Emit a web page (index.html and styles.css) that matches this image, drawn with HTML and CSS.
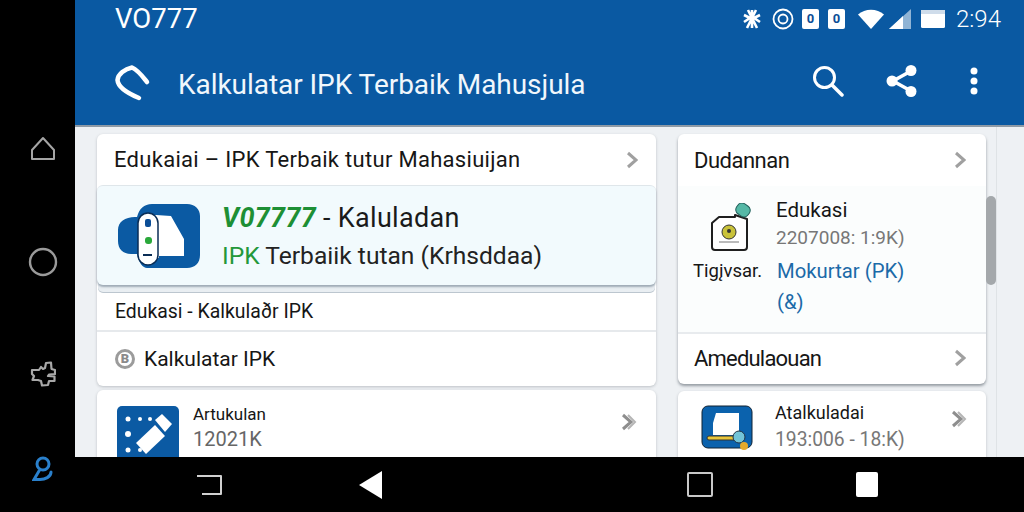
FILE: index.html
```html
<!DOCTYPE html>
<html lang="id">
<head>
<meta charset="utf-8">
<title>Kalkulator IPK</title>
<link rel="stylesheet" href="styles.css">
</head>
<body>
<div class="screen">
  <aside class="rail">
    <svg class="rail-ico home" viewBox="0 0 26 26"><path d="M2 23V14L13 2L24 14V23Z" fill="none" stroke="#a5a5a5" stroke-width="2" stroke-linejoin="round"/></svg>
    <svg class="rail-ico circle" viewBox="0 0 30 30"><circle cx="15" cy="15" r="13" fill="none" stroke="#9a9a9a" stroke-width="2.4"/></svg>
    <svg class="rail-ico puzzle" viewBox="0 0 26 26"><path d="M2 9H9L11 6L13 8L15 7L16 2L21 1.500L21.500 8L25 9V13L19 13.500L18 15L24.500 15.500V20H19L18 24L12 24.500L11 20L8 19H2.500L4 15L2 13Z" fill="none" stroke="#a8a8a8" stroke-width="2.200" stroke-linejoin="round"/></svg>
    <svg class="rail-ico person" viewBox="0 0 22 26"><circle cx="11" cy="8" r="6" fill="none" stroke="#2a80cc" stroke-width="3"/><path d="M7 15L2 23.500L8 23.500C13 23.500 19 21 19 16" fill="none" stroke="#2a80cc" stroke-width="3" stroke-linecap="round"/></svg>
  </aside>
  <div class="main">
    <header class="appbar">
      <div class="status">
        <span class="carrier">VO777</span>
        <div class="status-icons">
          <svg class="st st-a" viewBox="0 0 18 20"><path d="M5 1L14 19M13 1L4 19M1 6L7 9L1 13M17 6L11 9L17 13M9 1V8M9 12V19" fill="none" stroke="#fff" stroke-width="2.600"/></svg>
          <svg class="st st-b" viewBox="0 0 22 22"><circle cx="11" cy="11" r="9.500" fill="none" stroke="#fff" stroke-width="1.800"/><circle cx="11" cy="11" r="4.500" fill="none" stroke="#fff" stroke-width="1.800"/></svg>
          <span class="tile">0</span>
          <span class="tile">0</span>
          <svg class="st st-wifi" viewBox="0 0 26 20"><path d="M0 5.500C7 -1 19 -1 26 5.500L13 20Z" fill="#fff"/></svg>
          <svg class="st st-sig" viewBox="0 0 22 20"><path d="M0 20L22 0V20Z" fill="#fff" opacity=".55"/><path d="M0 20L14 7V20Z" fill="#fff"/></svg>
          <svg class="st st-bat" viewBox="0 0 24 18"><rect width="24" height="18" rx="1.500" fill="#fff"/><rect width="24" height="4" fill="#cfdcea"/></svg>
          <span class="time">2:94</span>
        </div>
      </div>
      <div class="toolbar">
        <svg class="logo" viewBox="0 0 36 36"><path d="M32 17C28 12 23 5 17 2.500C10 4 3 9 2.500 15C3 22 12 28 24 33" fill="none" stroke="#fff" stroke-width="4.500" stroke-linecap="round" stroke-linejoin="round"/></svg>
        <h1 class="app-title">Kalkulatar IPK Terbaik Mahusjula</h1>
        <div class="actions">
          <svg class="act search" viewBox="0 0 32 32"><circle cx="12.500" cy="12.500" r="10" fill="none" stroke="#fff" stroke-width="3"/><path d="M20 20L30 30" stroke="#fff" stroke-width="3.500" stroke-linecap="round"/></svg>
          <svg class="act share" viewBox="0 0 32 34"><path d="M25 7L7 17L25 27" fill="none" stroke="#fff" stroke-width="3.500"/><circle cx="25" cy="6.500" r="5.500" fill="#fff"/><circle cx="6" cy="17" r="5.500" fill="#fff"/><circle cx="25" cy="27.500" r="5.500" fill="#fff"/></svg>
          <svg class="act more" viewBox="0 0 8 28"><circle cx="4" cy="4" r="3.500" fill="#fff"/><circle cx="4" cy="14" r="3.500" fill="#fff"/><circle cx="4" cy="24" r="3.500" fill="#fff"/></svg>
        </div>
      </div>
    </header>
    <div class="content">
      <section class="col col-left">
        <div class="card card-main">
          <div class="row row-head">
            <span class="t-head t-head-wide">Edukaiai – IPK Terbaik tutur Mahasiuijan</span>
            <svg class="chev" viewBox="0 0 12 18"><path d="M2 2L10 9L2 16" fill="none" stroke="#a0a0a0" stroke-width="3"/></svg>
          </div>
          <div class="hero">
            <svg class="hero-ico" viewBox="0 0 84 66"><path d="M18 14H20C22 6 27 1 35 1H70C78 1 83 6 83 13V52C83 60 78 65 70 65H30C26 65 22 60 20 51H14C6 51 1 46 1 38V27C1 19 8 14 18 14Z" fill="#0b5aa3"/><path d="M30 12H39L54 13L67 36V53H42V55H30Z" fill="#fff"/><rect x="21" y="10" width="20" height="52" rx="10" fill="#fff" stroke="#0a2d55" stroke-width="1.500"/><rect x="28" y="16" width="6" height="8" rx="2" fill="#0b4d96"/><rect x="28" y="34" width="7" height="7" rx="3" fill="#2aa83a"/><rect x="26" y="51" width="9" height="2" fill="#0a2d55"/></svg>
            <div class="hero-text">
              <div class="hero-l1"><em class="brand">V07777</em> - Kaluladan</div>
              <div class="hero-l2"><span class="green">IPK</span> Terbaiik tutan (Krhsddaa)</div>
            </div>
          </div>
          <div class="row row-sub"><span class="t-sub">Edukasi - Kalkulaðr IPK</span></div>
          <div class="row row-kalk">
            <span class="badge">B</span>
            <span class="t-kalk">Kalkulatar IPK</span>
          </div>
        </div>
        <div class="card card-low">
          <svg class="low-ico" viewBox="0 0 62 62"><rect width="62" height="62" rx="5" fill="#0b5aa3"/><path d="M19 37L38 19L48 30L29 48Z" fill="#fff"/><path d="M38 14L45 8L55 18L48 26Z" fill="#fff"/><g fill="#fff"><circle cx="11" cy="13" r="2.500"/><circle cx="23" cy="13" r="2"/><circle cx="33" cy="13" r="2"/><circle cx="11" cy="28" r="3"/><circle cx="11" cy="44" r="2.500"/><circle cx="23" cy="44" r="2"/></g></svg>
          <div class="low-text">
            <div class="low-name low-name-small">Artukulan</div>
            <div class="low-meta">12021K</div>
          </div>
          <svg class="chev chev-double" viewBox="0 0 16 18"><path d="M2 2L10 9L2 16" fill="none" stroke="#8e8e8e" stroke-width="3"/><path d="M7 2L14 9L7 16" fill="none" stroke="#b5b5b5" stroke-width="2"/></svg>
        </div>
      </section>
      <section class="col col-right">
        <div class="card card-side">
          <div class="row row-head-side">
            <span class="t-head t-head-tight">Dudannan</span>
            <svg class="chev" viewBox="0 0 12 18"><path d="M2 2L10 9L2 16" fill="none" stroke="#a0a0a0" stroke-width="3"/></svg>
          </div>
          <div class="detail">
            <div class="detail-top">
              <svg class="doc-ico" viewBox="0 0 42 48"><path d="M8 14H24V12L36 16V44C36 46 35 47 33 47H4C2 47 1 46 1 44V20Z" fill="#fff" stroke="#1f1f1f" stroke-width="2" stroke-linejoin="round"/><circle cx="18" cy="29" r="7" fill="#c9c23a" stroke="#333" stroke-width="1"/><circle cx="18" cy="28" r="2" fill="#333"/><path d="M8 39H28" stroke="#777" stroke-width="1"/><rect x="25" y="1" width="14" height="12" rx="5" transform="rotate(35 32 7)" fill="#55b8a6" stroke="#1f5f5a" stroke-width="1"/></svg>
              <div class="detail-text">
                <div class="low-name low-name-edu">Edukasi</div>
                <div class="detail-meta">2207008: 1:9K)</div>
              </div>
            </div>
            <div class="detail-bottom">
              <span class="tig">Tigįvsar.</span>
              <span class="link">Mokurtar (PK)<br>(&amp;)</span>
            </div>
          </div>
          <div class="row row-foot">
            <span class="t-head t-head-foot">Amedulaouan</span>
            <svg class="chev" viewBox="0 0 12 18"><path d="M2 2L10 9L2 16" fill="none" stroke="#a0a0a0" stroke-width="3"/></svg>
          </div>
        </div>
        <div class="card card-low card-low-side">
          <svg class="low-ico2" viewBox="0 0 54 46"><rect x="1" y="1" width="50" height="42" rx="6" fill="#0b62ad" stroke="#123" stroke-width="1"/><path d="M15 8H38V30H12V18Z" fill="#fff"/><rect x="6" y="31" width="30" height="4" rx="2" fill="#e7c53a" stroke="#333" stroke-width="1"/><circle cx="38" cy="32" r="6" fill="#72c4d8" stroke="#234" stroke-width="1"/><circle cx="43" cy="41" r="4" fill="#e4a92b"/></svg>
          <div class="low-text2">
            <div class="low-name">Atalkuladai</div>
            <div class="low-meta2">193:006 - 18:K)</div>
          </div>
          <svg class="chev chev-double" viewBox="0 0 16 18"><path d="M2 2L10 9L2 16" fill="none" stroke="#8e8e8e" stroke-width="3"/><path d="M7 2L14 9L7 16" fill="none" stroke="#b5b5b5" stroke-width="2"/></svg>
        </div>
      </section>
      <div class="track"><div class="thumb"></div></div>
    </div>
    <nav class="navbar">
      <svg class="nav-recent" viewBox="0 0 28 22"><path d="M1 2H25V20H6" fill="none" stroke="#d0d0d0" stroke-width="2" stroke-linejoin="round"/></svg>
      <svg class="nav-back" viewBox="0 0 24 28"><path d="M0 14L23 0V28Z" fill="#fff"/></svg>
      <span class="nav-square"></span>
      <span class="nav-solid"></span>
    </nav>
  </div>
</div>
</body>
</html>
```
FILE: styles.css
```css
* { box-sizing: border-box; margin: 0; padding: 0; }
html, body { width: 1024px; height: 512px; overflow: hidden; background: #000; }
body { font-family: Roboto, "Liberation Sans", sans-serif; color: #161616; }
svg { display: block; flex: none; }

.screen { display: flex; width: 1024px; height: 512px; }

.rail { width: 75px; flex: none; background: #000; display: flex; flex-direction: column; align-items: center; padding-top: 136px; padding-left: 10px; }
.rail-ico.home { width: 26px; height: 26px; }
.rail-ico.circle { width: 30px; height: 30px; margin-top: 85px; }
.rail-ico.puzzle { width: 26px; height: 26px; margin-top: 84px; }
.rail-ico.person { width: 22px; height: 26px; margin-top: 69px; }

.main { flex: 1; display: flex; flex-direction: column; min-width: 0; }

.appbar { height: 127px; flex: none; background: #0a59a2; border-bottom: 2px solid #8e9aa6; color: #fff; padding: 0 22px 0 40px; }
.status { height: 37px; display: flex; align-items: center; justify-content: space-between; }
.carrier { font-size: 27.500px; line-height: 37px; }
.status-icons { display: flex; align-items: center; }
.st-a { width: 18px; height: 20px; }
.st-b { width: 22px; height: 22px; margin-left: 11px; }
.tile { width: 17px; height: 20px; margin-left: 8px; background: #fff; color: #0b4d96; border-radius: 2px; font-size: 13px; font-weight: 700; line-height: 20px; text-align: center; }
.tile + .tile { margin-left: 9px; }
.st-wifi { width: 26px; height: 20px; margin-left: 13px; }
.st-sig { width: 22px; height: 20px; margin-left: 5px; }
.st-bat { width: 24px; height: 18px; margin-left: 10px; }
.time { font-size: 24px; line-height: 24px; margin-left: 11px; width: 46px; font-weight: 300; white-space: nowrap; }

.toolbar { display: flex; align-items: center; height: 88px; }
.logo { width: 36px; height: 36px; margin-top: 4px; }
.app-title { font-size: 28px; font-weight: 400; margin: 6px 0 0 27px; white-space: nowrap; color: #f1f7fc; letter-spacing: -0.05px; }
.actions { margin-left: auto; display: flex; align-items: center; padding-right: 24px; }
.act.search { width: 32px; height: 32px; }
.act.share { width: 32px; height: 34px; margin-left: 42px; }
.act.more { width: 8px; height: 28px; margin-left: 52px; }

.content { flex: 1; min-height: 0; display: flex; align-items: flex-start; overflow: hidden; background: #eef1f4; padding: 7px 0 0 22px; }
.col { display: flex; flex-direction: column; }
.col-left { width: 559px; }
.col-right { width: 308px; margin-left: 22px; }
.card { background: #fff; border-radius: 6px; box-shadow: 0 1px 3px rgba(60,70,80,.28); }

.row { display: flex; align-items: center; padding: 0 18px; }
.row-head { height: 51px; padding: 0 18px 0 17px; justify-content: space-between; }
.row-head-side { height: 52px; padding: 0 20px 0 16px; justify-content: space-between; }
.t-head { font-size: 22px; white-space: nowrap; }
.t-head-wide { letter-spacing: 0.3px; }
.t-head-tight { letter-spacing: -0.5px; }
.t-head-foot { letter-spacing: -0.8px; }
.chev { width: 12px; height: 18px; }

.card-main { height: 252px; }
.hero { height: 100px; display: flex; align-items: center; padding-left: 20px; background: #f2fafd; border-radius: 6px; border-top: 1px solid #dfe6ea; box-shadow: 0 2px 2px rgba(70,90,110,.45), 0 8px 0 -1px #e9eef2, 0 9px 0 -1px #bcc6cf; }
.hero-ico { width: 84px; height: 66px; }
.hero-text { margin-left: 21px; padding-top: 2px; }
.hero-l1 { font-size: 27px; line-height: 38px; color: #1a1a1a; white-space: nowrap; letter-spacing: 0.3px; }
.brand { color: #1d8f35; font-weight: 700; }
.hero-l2 { font-size: 24.600px; line-height: 38px; white-space: nowrap; color: #222; }
.green { color: #23983a; }

.row-sub { height: 39px; margin-top: 8px; padding-left: 18px; border-bottom: 2px solid #e6e9ec; }
.t-sub { font-size: 19.400px; white-space: nowrap; }
.row-kalk { height: 54px; padding-left: 18px; }
.badge { width: 20px; height: 20px; border-radius: 50%; background: #fff; border: 3px solid #9b9b9b; color: #8a8a8a; font-size: 13px; font-weight: 900; line-height: 14px; text-align: center; }
.t-kalk { font-size: 21px; margin-left: 9px; white-space: nowrap; }

.card-low { height: 90px; margin-top: 4px; display: flex; align-items: flex-start; padding: 16px 19px 0 20px; }
.card-low > .chev-double { width: 16px; height: 18px; margin-left: auto; margin-top: 7px; }
.low-ico { width: 62px; height: 62px; }
.low-text { margin-left: 14px; margin-top: -4px; }
.low-name { font-size: 18px; line-height: 24px; white-space: nowrap; }
.low-name-small { font-size: 17px; }
.low-name-edu { font-size: 20.500px; }
.low-meta { font-size: 20px; line-height: 26px; color: #666; white-space: nowrap; }

.detail { height: 148px; padding: 11px 0 0 15px; background: #fbfdfd; border-bottom: 2px solid #e8ebee; }
.detail-top { display: flex; padding-left: 18px; }
.doc-ico { width: 42px; height: 48px; margin-top: 6px; }
.detail-text { margin-left: 23px; margin-top: 1px; }
.detail-meta { font-size: 19px; line-height: 32px; color: #777; white-space: nowrap; }
.detail-bottom { display: flex; margin-top: 2px; }
.tig { font-size: 18.500px; line-height: 31px; white-space: nowrap; }
.link { font-size: 20.300px; line-height: 31px; color: #1b6aa8; margin-left: 15px; white-space: nowrap; }
.row-foot { height: 48px; padding: 0 20px 0 16px; justify-content: space-between; }
.card-side { height: 250px; box-shadow: 0 2px 3px rgba(60,70,80,.5); }

.card-low-side { margin-top: 7px; padding: 14px 19px 0 23px; }
.low-ico2 { width: 54px; height: 46px; }
.low-text2 { margin-left: 20px; margin-top: -4px; }
.low-meta2 { font-size: 19.300px; line-height: 30px; color: #777; white-space: nowrap; }
.card-low-side > .chev-double { margin-top: 5px; }

.track { width: 11px; height: 330px; margin-top: -7px; flex: none; border-right: 1px solid #dfe3e6; padding-top: 69px; }
.thumb { width: 10px; height: 89px; background: #a4a8ab; border-radius: 5px; }

.navbar { height: 55px; flex: none; background: #000; display: flex; align-items: center; padding-left: 121px; }
.nav-recent { width: 28px; height: 22px; }
.nav-back { width: 24px; height: 28px; margin-left: 135px; }
.nav-square { width: 26px; height: 25px; margin-left: 304px; border: 2px solid #c8c8c8; border-radius: 2px; }
.nav-solid { width: 22px; height: 25px; margin-left: 143px; background: #fff; border-radius: 2px; }
```
